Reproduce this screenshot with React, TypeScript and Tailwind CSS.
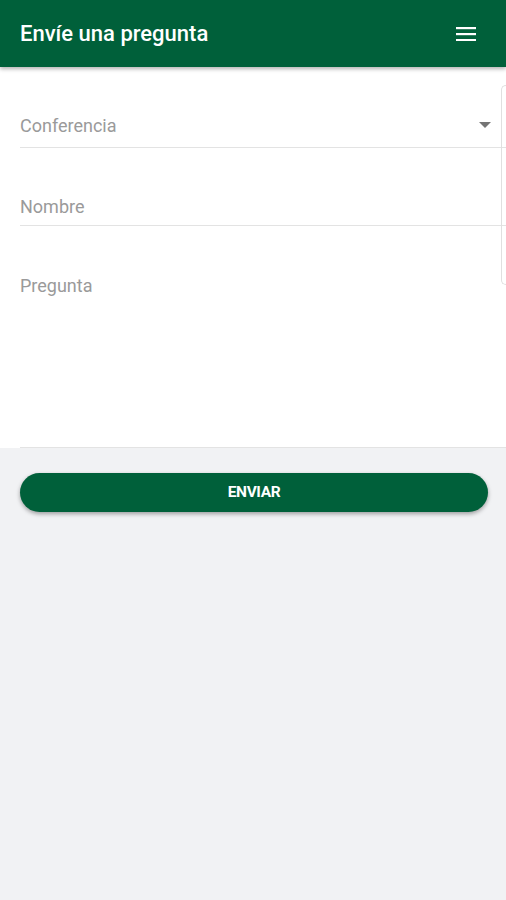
function Field({ label, cls, select = false }: { label: string; cls: string; select?: boolean }) {
  return (
    <div className={`ml-5 border-b border-[#e3e3e3] flex ${cls}`}>
      <span className="flex-1 text-[18px] leading-6 text-[#9a9a9a]">{label}</span>
      {select && (
        <span className="mr-[15px] mb-[10px] w-0 h-0 border-l-[6px] border-r-[6px] border-t-[6px] border-l-transparent border-r-transparent border-t-[#757575]" />
      )}
    </div>
  );
}

export default function App() {
  return (
    <div className="min-h-[900px] bg-[#f1f2f4] font-['Roboto',sans-serif]">
      {/* Header */}
      <header className="h-[67px] bg-[#00603a] flex items-center justify-between px-5 shadow-[0_2px_4px_rgba(0,0,0,0.3)] relative z-10">
        <h1 className="text-white text-[22px] font-medium">Envíe una pregunta</h1>
        <svg width="20" height="14" viewBox="0 0 20 14" className="mr-[10px]">
          <rect x="0" y="0" width="20" height="2.2" fill="white" />
          <rect x="0" y="6" width="20" height="2.2" fill="white" />
          <rect x="0" y="12" width="20" height="2.2" fill="white" />
        </svg>
      </header>

      {/* Form */}
      <div className="bg-white relative">
        <div className="absolute right-0 top-[18px] w-[5px] h-[200px] border-l border-t border-b border-[#e0e0e0] rounded-l-[6px]" />
        <Field label="Conferencia" cls="h-[81px] items-end pb-[9px]" select />
        <Field label="Nombre" cls="h-[78px] items-end pb-[6px]" />
        <Field label="Pregunta" cls="h-[222px] items-start pt-[48px]" />
      </div>

      <div className="px-5 pt-[25px]">
        <button className="w-[468px] h-[39px] rounded-full bg-[#00603a] text-white text-[15.5px] font-bold tracking-tight shadow-[0_2px_4px_rgba(0,0,0,0.35)]">
          ENVIAR
        </button>
      </div>
    </div>
  );
}
